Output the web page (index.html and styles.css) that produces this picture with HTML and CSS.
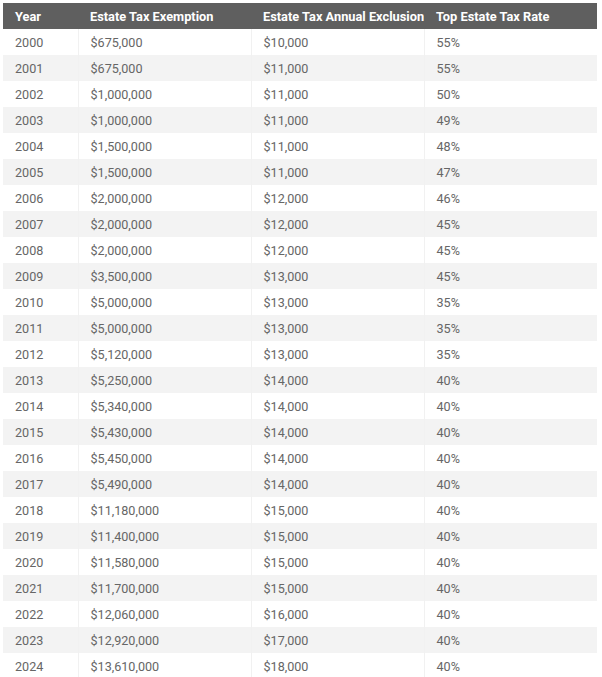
FILE: index.html
```html
<!DOCTYPE html>
<html>
<head>
<meta charset="utf-8">
<link rel="stylesheet" href="styles.css">
</head>
<body>
<table class="tax-table">
  <colgroup>
    <col class="col-year">
    <col class="col-wide">
    <col class="col-wide">
    <col class="col-wide">
  </colgroup>
  <thead>
    <tr>
      <th>Year</th>
      <th>Estate Tax Exemption</th>
      <th>Estate Tax Annual Exclusion</th>
      <th>Top Estate Tax Rate</th>
    </tr>
  </thead>
  <tbody>
    <tr><td>2000</td><td>$675,000</td><td>$10,000</td><td>55%</td></tr>
    <tr><td>2001</td><td>$675,000</td><td>$11,000</td><td>55%</td></tr>
    <tr><td>2002</td><td>$1,000,000</td><td>$11,000</td><td>50%</td></tr>
    <tr><td>2003</td><td>$1,000,000</td><td>$11,000</td><td>49%</td></tr>
    <tr><td>2004</td><td>$1,500,000</td><td>$11,000</td><td>48%</td></tr>
    <tr><td>2005</td><td>$1,500,000</td><td>$11,000</td><td>47%</td></tr>
    <tr><td>2006</td><td>$2,000,000</td><td>$12,000</td><td>46%</td></tr>
    <tr><td>2007</td><td>$2,000,000</td><td>$12,000</td><td>45%</td></tr>
    <tr><td>2008</td><td>$2,000,000</td><td>$12,000</td><td>45%</td></tr>
    <tr><td>2009</td><td>$3,500,000</td><td>$13,000</td><td>45%</td></tr>
    <tr><td>2010</td><td>$5,000,000</td><td>$13,000</td><td>35%</td></tr>
    <tr><td>2011</td><td>$5,000,000</td><td>$13,000</td><td>35%</td></tr>
    <tr><td>2012</td><td>$5,120,000</td><td>$13,000</td><td>35%</td></tr>
    <tr><td>2013</td><td>$5,250,000</td><td>$14,000</td><td>40%</td></tr>
    <tr><td>2014</td><td>$5,340,000</td><td>$14,000</td><td>40%</td></tr>
    <tr><td>2015</td><td>$5,430,000</td><td>$14,000</td><td>40%</td></tr>
    <tr><td>2016</td><td>$5,450,000</td><td>$14,000</td><td>40%</td></tr>
    <tr><td>2017</td><td>$5,490,000</td><td>$14,000</td><td>40%</td></tr>
    <tr><td>2018</td><td>$11,180,000</td><td>$15,000</td><td>40%</td></tr>
    <tr><td>2019</td><td>$11,400,000</td><td>$15,000</td><td>40%</td></tr>
    <tr><td>2020</td><td>$11,580,000</td><td>$15,000</td><td>40%</td></tr>
    <tr><td>2021</td><td>$11,700,000</td><td>$15,000</td><td>40%</td></tr>
    <tr><td>2022</td><td>$12,060,000</td><td>$16,000</td><td>40%</td></tr>
    <tr><td>2023</td><td>$12,920,000</td><td>$17,000</td><td>40%</td></tr>
    <tr><td>2024</td><td>$13,610,000</td><td>$18,000</td><td>40%</td></tr>
  </tbody>
</table>
</body>
</html>
```
FILE: styles.css
```css
html, body {
  margin: 0;
  padding: 0;
  background: #ffffff;
}
body {
  padding: 3px 5px 0 3px;
  font-family: Roboto, "Liberation Sans", Arial, sans-serif;
}
.tax-table {
  width: 594px;
  border-collapse: collapse;
  table-layout: fixed;
}
.col-year { width: 75px; }
.col-wide { width: 173px; }
.tax-table th,
.tax-table td {
  height: 26px;
  padding: 0 0 0 12px;
  text-align: left;
  white-space: nowrap;
  overflow: hidden;
  box-sizing: border-box;
}
.tax-table th {
  background: #5f5f5f;
  color: #ffffff;
  font-weight: 700;
  font-size: 12.8px;
}
.tax-table td {
  color: #666666;
  font-size: 12.6px;
  font-weight: 400;
  border-left: 1px solid #f1f1f1;
}
.tax-table td:first-child {
  border-left: none;
}
.tax-table tbody tr:nth-child(even) td {
  background: #f3f3f3;
}
```
